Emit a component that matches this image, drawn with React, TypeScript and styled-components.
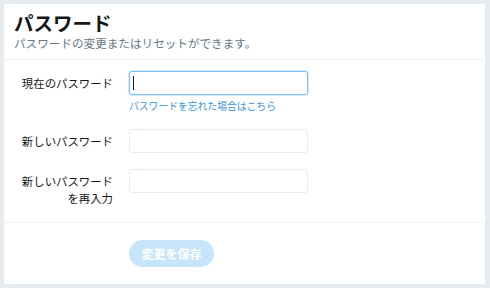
import styled, { createGlobalStyle } from "styled-components";

const GlobalStyle = createGlobalStyle`
 html, body {
  margin: 0;
  padding: 0;
  background: #e6ecf0;
  font-family: "Noto Sans CJK JP", "Noto Sans", sans-serif;
 }
`;

type Field = { label: string[]; focused?: boolean; hint?: string };

const fields: Field[] = [
 { label: ["現在のパスワード"], focused: true, hint: "パスワードを忘れた場合はこちら" },
 { label: ["新しいパスワード"] },
 { label: ["新しいパスワード", "を再入力"] },
];

export default function App() {
 return (
  <Page>
   <GlobalStyle />
   <Card>
    <Header>
     <h1>パスワード</h1>
     <p>パスワードの変更またはリセットができます。</p>
    </Header>
    <Form>
     {fields.map((f, i) => (
      <Row key={i}>
       <Label>
        {f.label.map((l) => (
         <span key={l}>{l}</span>
        ))}
       </Label>
       <Control>
        <InputWrap>
         <Input type="password" $focused={f.focused} />
         {f.focused && <Caret />}
        </InputWrap>
        {f.hint && <Hint href="#">{f.hint}</Hint>}
       </Control>
      </Row>
     ))}
    </Form>
    <Footer>
     <SaveButton disabled>変更を保存</SaveButton>
    </Footer>
   </Card>
  </Page>
 );
}

const Page = styled.div`
 height: 288px;
 padding: 4px 5px 4px 4px;
 box-sizing: border-box;
`;

const Card = styled.section`
 background: #ffffff;
 height: 280px;
 display: flex;
 flex-direction: column;
`;

const Header = styled.header`
 height: 56px;
 box-sizing: border-box;
 padding: 7px 10px 0;
 border-bottom: 1px solid #eef1f4;
 h1 {
  margin: 0;
  font-size: 19.5px;
  line-height: 24px;
  font-weight: 700;
  color: #14171a;
 }
 p {
  margin: 0;
  font-size: 11.6px;
  line-height: 16px;
  color: #657786;
 }
`;

const Form = styled.div`
 display: flex;
 flex-direction: column;
 gap: 16px;
 padding: 11px 0 0;
 height: 163px;
 box-sizing: border-box;
 border-bottom: 1px solid #eef1f4;
`;

const Row = styled.div`
 display: grid;
 grid-template-columns: 109px 179px;
 column-gap: 16px;
`;

const Label = styled.div`
 display: flex;
 flex-direction: column;
 align-items: flex-end;
 padding-top: 4px;
 font-size: 11.4px;
 line-height: 17px;
 color: #14171a;
`;

const Control = styled.div`
 display: flex;
 flex-direction: column;
`;

const InputWrap = styled.div`
 position: relative;
 display: flex;
`;

const Input = styled.input<{ $focused?: boolean }>`
 flex: 1;
 height: 24px;
 box-sizing: border-box;
 border: 1px solid ${(p) => (p.$focused ? "#7fc1ee" : "#e6ecf0")};
 box-shadow: ${(p) => (p.$focused ? "0 0 0 1px #d2ebfc" : "none")};
 border-radius: 3px;
 outline: none;
 padding: 0 4px;
 font-size: 12px;
`;

const Caret = styled.span`
 position: absolute;
 left: 4px;
 top: 5px;
 width: 1px;
 height: 14px;
 background: #14171a;
`;

const Hint = styled.a`
 margin-top: 4px;
 font-size: 9.8px;
 line-height: 14px;
 color: #3b94d9;
 text-decoration: none;
`;

const Footer = styled.div`
 padding: 17px 0 0 125px;
`;

const SaveButton = styled.button`
 width: 85px;
 height: 27px;
 border: none;
 border-radius: 14px;
 background: #c6e5fb;
 color: #ffffff;
 font-family: "Noto Sans CJK JP", sans-serif;
 font-size: 12px;
 font-weight: 700;
 padding: 0;
`;
